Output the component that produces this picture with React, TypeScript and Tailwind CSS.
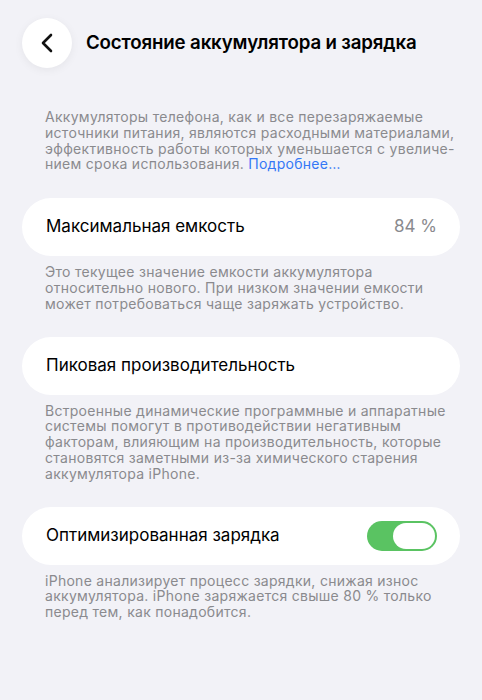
import React from 'react';

const Caption = ({ children, className = '' }: { children: React.ReactNode; className?: string }) => (
    <p className={`pl-[45px] pr-[16px] text-[14px] leading-[15.8px] tracking-[0.28px] text-[#8a8a8e] ${className}`}>
        {children}
    </p>
);

const Card = ({ children }: { children: React.ReactNode }) => (
    <div className="mx-[22px] h-[58px] rounded-full bg-white pl-[24px] pr-[23px] flex items-center justify-between">
        {children}
    </div>
);

const Toggle = () => (
    <div className="w-[70px] h-[30px] rounded-full bg-[#5ac362] p-[2px] flex justify-end">
        <div className="w-[42px] h-[26px] rounded-full bg-white" />
    </div>
);

export default function App() {
    return (
        <div className="min-h-[700px] bg-[#f2f2f7] font-['Inter','Noto_Sans',sans-serif] text-black">
            {/* Шапка */}
            <div className="flex items-center pt-[18px] pl-[22px]">
                <button className="w-[50px] h-[50px] rounded-full bg-white shadow-[0_2px_10px_rgba(0,0,0,0.06)] flex items-center justify-center">
                    <svg width="14" height="20" viewBox="0 0 14 20" fill="none">
                        <path d="M11 2 L3 10 L11 18" stroke="#111" strokeWidth="2.6" strokeLinecap="round" strokeLinejoin="round" />
                    </svg>
                </button>
                <h1 className="ml-[14px] text-[18.7px] font-semibold tracking-[-0.15px]">Состояние аккумулятора и зарядка</h1>
            </div>

            <Caption className="mt-[41px]">
                Аккумуляторы телефона, как и все перезаряжаемые<br />
                источники питания, являются расходными материалами,<br />
                эффективность работы которых уменьшается с увеличе-<br />
                нием срока использования.{' '}
                <span className="text-[#3478f6]">Подробнее…</span>
            </Caption>

            <div className="mt-[26px]">
                <Card>
                    <span className="text-[17px]">Максимальная емкость</span>
                    <span className="text-[17px] text-[#8a8a8e]">84 %</span>
                </Card>
            </div>
            <Caption className="mt-[8px]">
                Это текущее значение емкости аккумулятора<br />
                относительно нового. При низком значении емкости<br />
                может потребоваться чаще заряжать устройство.
            </Caption>

            <div className="mt-[25px]">
                <Card>
                    <span className="text-[17px]">Пиковая производительность</span>
                </Card>
            </div>
            <Caption className="mt-[8px]">
                Встроенные динамические программные и аппаратные<br />
                системы помогут в противодействии негативным<br />
                факторам, влияющим на производительность, которые<br />
                становятся заметными из-за химического старения<br />
                аккумулятора iPhone.
            </Caption>

            <div className="mt-[25px]">
                <Card>
                    <span className="text-[17px]">Оптимизированная зарядка</span>
                    <Toggle />
                </Card>
            </div>
            <Caption className="mt-[8px]">
                iPhone анализирует процесс зарядки, снижая износ<br />
                аккумулятора. iPhone заряжается свыше 80 % только<br />
                перед тем, как понадобится.
            </Caption>
        </div>
    );
}
